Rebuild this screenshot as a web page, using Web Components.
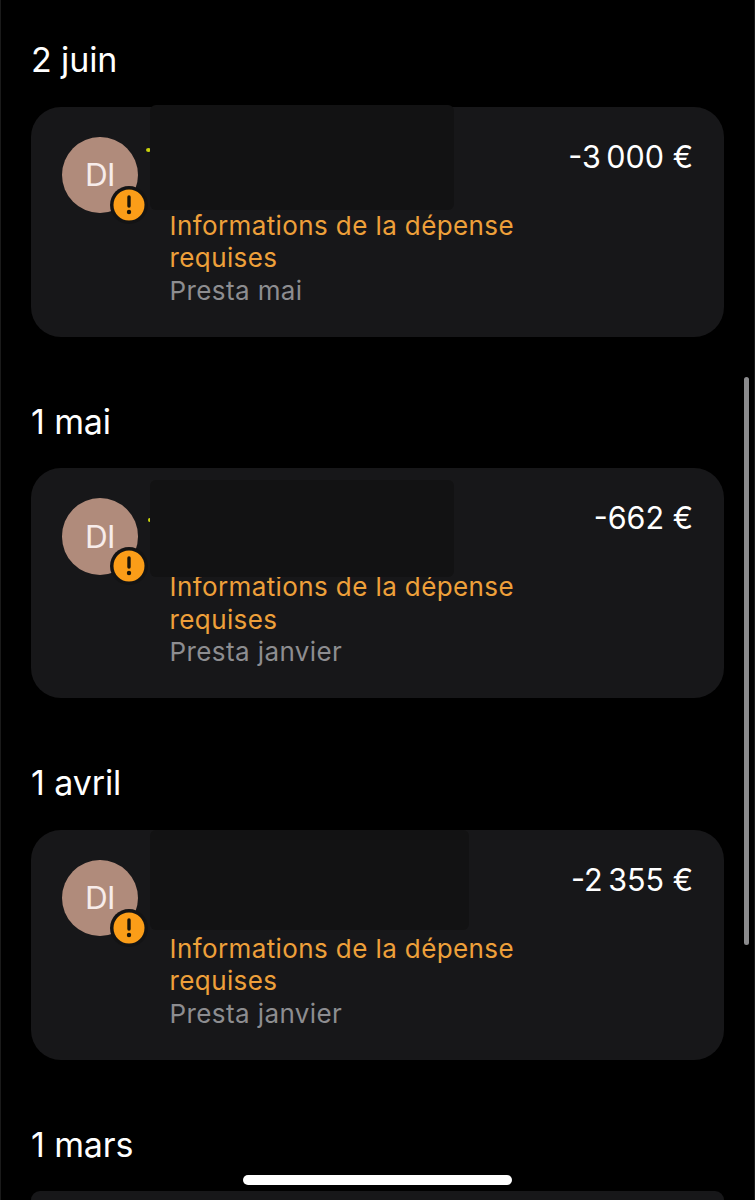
<!DOCTYPE html>
<html lang="fr"><head><meta charset="utf-8"><title>Dépenses</title>
<style>
html,body{margin:0;background:#000;height:1200px;overflow:hidden}
body{font-family:Inter,"Noto Sans",sans-serif;color:#fff;position:relative}
</style></head><body>
<template id="t-list"><style>
:host{display:flex;flex-direction:column;padding:37px 30px 0;box-sizing:border-box;width:755px;height:1200px;border-left:1px solid #1a1a1a;border-right:1px solid #1a1a1a}
</style><slot></slot></template>

<template id="t-group"><style>
:host{display:block;padding-bottom:62px}
h2{margin:0;height:69.5px;line-height:46px;font-size:34px;font-weight:400;letter-spacing:-.1px}
:host([last]){padding-bottom:0}
</style><h2 id="d"></h2><slot></slot></template>

<template id="t-avatar"><style>
:host{display:block;position:relative;width:76px;height:76px;flex:none}
.c{width:76px;height:76.5px;border-radius:50%;background:#b08b7b;color:#f7ecea;display:flex;align-items:center;justify-content:center;font-size:31.5px;letter-spacing:-.5px}
.b{position:absolute;left:48px;top:49px;width:38px;height:38px}
svg{display:block}
</style><div class="c">DI</div><svg class="b" viewBox="0 0 38 38" width="38" height="38"><circle cx="19" cy="19" r="19" fill="#131314"/><circle cx="19" cy="19" r="15.5" fill="#fb9d18"/><path d="M19 11v9" stroke="#1a1408" stroke-width="3.4" stroke-linecap="round" fill="none"/><circle cx="19" cy="26" r="2.2" fill="#1a1408"/></svg></template>

<template id="t-card"><style>
:host{display:flex;position:relative;box-sizing:border-box;height:230px;background:#171719;border-radius:30px;padding:30px 32px 0 31px;gap:31.5px}
.text{width:370px;padding-top:73px}
.warn{color:#eea03a;font-size:26px;line-height:32.5px;letter-spacing:.4px}
.note{color:#8d8d90;font-size:26px;line-height:32.5px;letter-spacing:.4px}
.amt{font-size:30.5px;line-height:40px;white-space:nowrap;position:absolute;right:31px;top:30px}
.mask{position:absolute;background:#121213;border-radius:6px}
.dot{position:absolute;background:#c8d20c;border-radius:50%}
</style><ex-avatar></ex-avatar><div class="text"><div class="warn">Informations de la dépense requises</div><div class="note" id="n"></div></div><div class="amt" id="a"></div><div class="dot" id="o"></div><div class="mask" id="m"></div></template>

<template id="t-peek"><style>
:host{display:block;height:9px;background:#171719;border-radius:30px 30px 0 0}
</style></template>
<template id="t-scroll"><style>
:host{display:block;position:absolute;left:744px;top:377px;width:5px;height:568px;border-radius:3px;background:#8b8b8d}
</style></template>
<template id="t-home"><style>
:host{display:block;position:absolute;left:243px;top:1175px;width:269px;height:10px;border-radius:5px;background:#fff}
</style></template>

<script>
function mk(name,id,extra){customElements.define(name,class extends HTMLElement{
 constructor(){super();this.attachShadow({mode:'open'}).appendChild(document.getElementById(id).content.cloneNode(true));}
 connectedCallback(){if(extra)extra.call(this,this.shadowRoot)}
});}
mk('ex-list','t-list');
mk('ex-group','t-group',function(s){s.getElementById('d').textContent=this.getAttribute('date')});
mk('ex-avatar','t-avatar');
mk('ex-card','t-card',function(s){
 s.getElementById('n').textContent=this.getAttribute('note');
 s.getElementById('a').textContent=this.getAttribute('amount');
 const m=s.getElementById('m').style,[l,t,w,h]=this.getAttribute('mask').split(',');
 m.left=l+'px';m.top=t+'px';m.width=w+'px';m.height=h+'px';
 const o=s.getElementById('o').style,d=this.getAttribute('dot');
 if(d){const[x,y,dw,dh]=d.split(',');o.left=x+'px';o.top=y+'px';o.width=dw+'px';o.height=dh+'px'}else o.display='none';
});
mk('ex-peek','t-peek');
mk('ex-scroll','t-scroll');
mk('ex-home','t-home');
</script>

<ex-list>
<ex-group date="2 juin"><ex-card amount="-3&#8201;000 €" note="Presta mai" mask="119,-2,304,105" dot="115,41,5,4"></ex-card></ex-group>
<ex-group date="1 mai"><ex-card amount="-662 €" note="Presta janvier" mask="119,12,304,97" dot="117,50,3,4"></ex-card></ex-group>
<ex-group date="1 avril"><ex-card amount="-2&#8201;355 €" note="Presta janvier" mask="119,0,319,100"></ex-card></ex-group>
<ex-group date="1 mars" last><ex-peek></ex-peek></ex-group>
</ex-list>
<ex-scroll></ex-scroll>
<ex-home></ex-home>
</body></html>
